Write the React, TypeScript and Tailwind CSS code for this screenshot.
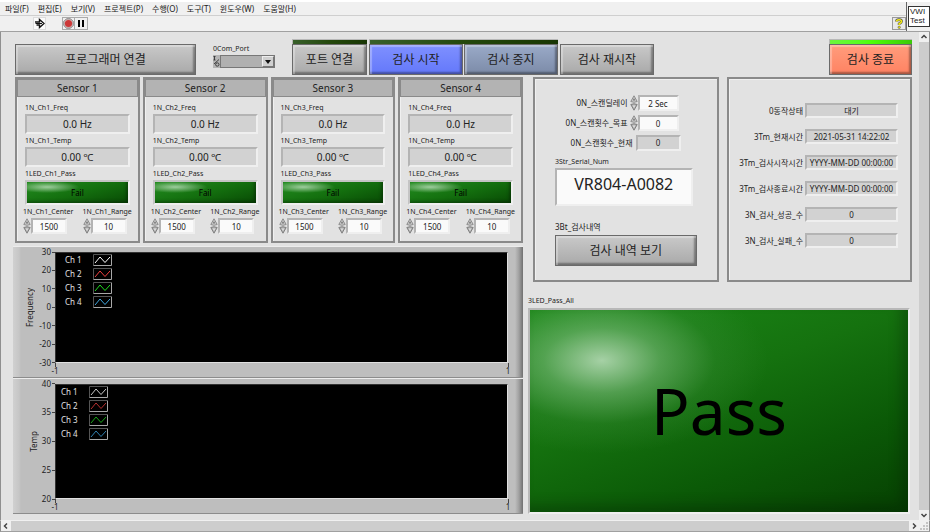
import React from "react";

const INSET = "border-2 border-t-[#b4b4b4] border-l-[#b4b4b4] border-r-[#efefef] border-b-[#efefef]";
const PANEL = "border-2 border-[#8a8a8a] shadow-[inset_1px_1px_0_#f0f0f0]";
const RAISED =
  "border border-[#6a6a6a] shadow-[inset_2px_2px_1px_rgba(255,255,255,0.3),inset_-2px_-2px_2px_rgba(0,0,0,0.35)]";

const TONES = {
  gray: "bg-linear-to-b from-[#c9c9c9] to-[#a9a9a9]",
  blue: "bg-linear-to-b from-[#7f90ff] to-[#6478fa]",
  slate: "bg-linear-to-b from-[#9aaac8] to-[#7c8ba8]",
  coral: "bg-linear-to-b from-[#ff9c7c] to-[#ff8262]",
};

function PushButton({ tone, children }: { tone: keyof typeof TONES; children: React.ReactNode }) {
  return (
    <button type="button" className={`h-[31px] w-full pt-px text-[12px] leading-none ${RAISED} ${TONES[tone]}`}>
      {children}
    </button>
  );
}

function StatusBar({ on = false }: { on?: boolean }) {
  return (
    <div
      className={`h-[5px] w-full border-t border-l border-[#b8b8b8] ${
        on
          ? "bg-linear-to-r from-[#6cf53c] via-[#4dff08] to-[#3cc80a]"
          : "bg-linear-to-r from-[#38602a] via-[#24480c] to-[#183604]"
      }`}
    />
  );
}

function Spinner({ name }: { name: string }) {
  return (
    <span className="flex w-2 flex-col">
      <button type="button" aria-label={`${name} +`} className="h-2 w-2">
        <svg viewBox="0 0 8 8" className="h-2 w-2">
          <path d="M4 0.8 L7.2 6.5 Q4 8 0.8 6.5 Z" fill="#d0d0d0" stroke="#8c8c8c" strokeWidth="1" />
          <path d="M4 3 L5.4 5.4 H2.6 Z" fill="#777" />
        </svg>
      </button>
      <button type="button" aria-label={`${name} -`} className="h-2 w-2">
        <svg viewBox="0 0 8 8" className="h-2 w-2">
          <path d="M4 7.2 L7.2 1.5 Q4 0 0.8 1.5 Z" fill="#b0b0b0" stroke="#808080" strokeWidth="1" />
          <path d="M4 5 L5.4 2.6 H2.6 Z" fill="#e0e0e0" />
        </svg>
      </button>
    </span>
  );
}

function NumberBox({ id, name, value, width }: { id: string; name: string; value: string; width: string }) {
  return (
    <span className="flex items-center">
      <Spinner name={name} />
      <input
        id={id}
        defaultValue={value}
        className={`h-4 bg-[#fafafa] text-center text-[8px] leading-none outline-none ${width} ${INSET}`}
      />
    </span>
  );
}

function Readout({ id, label, value }: { id: string; label: string; value: string }) {
  return (
    <div className="flex flex-col gap-0.5 px-0.5">
      <label htmlFor={id} className="text-[7px] leading-[8px]">
        {label}
      </label>
      <output
        id={id}
        className={`flex h-5 items-center justify-center bg-[#d2d2d2] text-[10px] leading-none ${INSET}`}
      >
        {value}
      </output>
    </div>
  );
}

function SensorCard({ n }: { n: number }) {
  return (
    <section className={PANEL}>
      <h2 className="h-[18px] border border-[#8a8a8a] bg-[#b3b3b3] text-center text-[10px] leading-4">Sensor {n}</h2>
      <div className="flex flex-col gap-[3px] px-1.5 pt-[7px] pb-[7px]">
        <Readout id={`freq${n}`} label={`1N_Ch${n}_Freq`} value="0.0 Hz" />
        <Readout id={`temp${n}`} label={`1N_Ch${n}_Temp`} value="0.00 ℃" />
        <div className="flex flex-col gap-0.5 px-0.5">
          <span className="text-[7px] leading-[8px]">1LED_Ch{n}_Pass</span>
          <div className="flex h-[25px] items-center justify-center border-2 border-t-[#c4c4c4] border-r-[#efefef] border-b-[#efefef] border-l-[#c4c4c4] bg-[radial-gradient(ellipse_32%_28%_at_20%_24%,rgba(190,225,190,0.8),rgba(120,180,120,0)),linear-gradient(165deg,#238c20,#14700f_50%,#084a04)] text-[8px] leading-none text-black shadow-[inset_-2px_-2px_3px_rgba(0,0,0,0.3)]">
            Fail
          </div>
        </div>
        <div className="flex justify-between">
          <div className="flex flex-col gap-0.5">
            <label htmlFor={`center${n}`} className="text-[7px] leading-[8px]">
              1N_Ch{n}_Center
            </label>
            <NumberBox id={`center${n}`} name={`Center ${n}`} value="1500" width="w-9" />
          </div>
          <div className="flex flex-col gap-0.5">
            <label htmlFor={`range${n}`} className="text-[7px] leading-[8px]">
              1N_Ch{n}_Range
            </label>
            <NumberBox id={`range${n}`} name={`Range ${n}`} value="10" width="w-9" />
          </div>
        </div>
      </div>
    </section>
  );
}

type ChartProps = {
  title: string;
  ticks: number[];
  grow: string;
  titleWidth: string;
  legendPad: string;
  colors: string[];
};

function Chart({ title, ticks, grow, titleWidth, legendPad, colors }: ChartProps) {
  return (
    <section
      className={`flex flex-col border-t border-b border-t-[#ececec] border-b-[#8c8c8c] bg-[linear-gradient(to_right,#d0d0d0,#c6c6c6_6px,#bebebe_8px,#bebebe_calc(100%-8px),#a0a0a0_calc(100%-4px),#707070)] pt-[5px] pr-[15px] ${grow}`}
    >
      <div className="flex flex-1">
        <div className="flex w-[42px] justify-between">
          <div className={`flex items-center justify-end ${titleWidth}`}>
            <span className="rotate-180 text-[8px] leading-[10px] [writing-mode:vertical-rl]">{title}</span>
          </div>
          <div className="flex w-4 flex-col justify-between">
            {ticks.map((t) => (
              <div key={t} className="flex h-0 items-center justify-end gap-px text-[8px] leading-none">
                {t}
                <span className="h-px w-[3px] shrink-0 bg-[#444]" />
              </div>
            ))}
          </div>
        </div>
        <div
          className={`flex flex-1 flex-col gap-0.5 border border-t-[#333] border-r-[#e0e0e0] border-b-[#e0e0e0] border-l-[#333] bg-black ${legendPad}`}
        >
          {colors.map((c, i) => (
            <div key={c} className="flex items-center gap-3 text-[8px] leading-none text-[#e0e0e0]">
              <span className="w-4 whitespace-nowrap">Ch {i + 1}</span>
              <svg viewBox="0 0 19 12" className="h-3 w-[19px]">
                <path d="M0.5 11.5 V0.5 H18" fill="none" stroke="#555" />
                <path d="M0.5 11.5 H18.5 V0.5" fill="none" stroke="#a8a8a8" />
                <path d="M2 9 L7 3 L12 8.5 L17 3" fill="none" stroke={c} strokeWidth="1" />
              </svg>
            </div>
          ))}
        </div>
      </div>
      <div className="-mr-1 flex h-[14px] justify-between pl-[38px] text-[8px] leading-none">
        <span className="flex w-2 flex-col items-center">
          <span className="h-1 w-px shrink-0 bg-[#444]" />
          -1
        </span>
        <span className="flex w-2 flex-col items-center">
          <span className="h-1 w-px shrink-0 bg-[#444]" />1
        </span>
      </div>
    </section>
  );
}

function StatusRow({ id, label, value }: { id: string; label: string; value: string }) {
  return (
    <div className="flex items-center justify-end gap-0.5">
      <label htmlFor={id} className="text-[8px] leading-none whitespace-nowrap">
        {label}
      </label>
      <output
        id={id}
        className={`flex h-[15px] w-[93px] items-center justify-center bg-[#d2d2d2] text-[8px] leading-none whitespace-nowrap ${INSET}`}
      >
        {value}
      </output>
    </div>
  );
}

const MENU = ["파일(F)", "편집(E)", "보기(V)", "프로젝트(P)", "수행(O)", "도구(T)", "윈도우(W)", "도움말(H)"];

const STATUS = [
  ["0동작상태", "대기"],
  ["3Tm_현재시간", "2021-05-31 14:22:02"],
  ["3Tm_검사시작시간", "YYYY-MM-DD 00:00:00"],
  ["3Tm_검사종료시간", "YYYY-MM-DD 00:00:00"],
  ["3N_검사_성공_수", "0"],
  ["3N_검사_실패_수", "0"],
];

function ScrollArrow({ label, d }: { label: string; d: string }) {
  return (
    <button type="button" aria-label={label} className="flex size-[10px] shrink-0 items-center justify-center bg-[#f0f0f0]">
      <svg viewBox="0 0 10 10" className="size-[10px]">
        <path d={d} fill="none" stroke="#444" strokeWidth="1.5" />
      </svg>
    </button>
  );
}

function Header() {
  return (
    <header className="flex h-8 border-t-2 border-b border-t-white border-b-[#a0a0a0] bg-[#f0f0f0]">
      <div className="flex flex-1 flex-col">
        <nav className="flex h-[14px] items-center gap-[9px] border-b border-[#cfcfcf] pl-[5px] text-[8px] leading-none">
          {MENU.map((m) => (
            <button key={m} type="button" className="whitespace-nowrap">
              {m}
            </button>
          ))}
        </nav>
        <div className="flex flex-1 items-center pl-[33px]">
          <button type="button" aria-label="실행" className="h-[13px] w-[13px] border border-[#dcdcdc] bg-[#fafafa]">
            <svg viewBox="0 0 11 11" className="size-[11px]">
              <path d="M1 4 H5.5 V1.5 L10 5.5 L5.5 9.5 V7 H2.5" fill="#fff" stroke="#111" strokeWidth="1.4" />
              <path d="M1.5 5.5 H8" stroke="#111" strokeWidth="1" />
            </svg>
          </button>
          <button
            type="button"
            aria-label="중단"
            className="ml-4 flex h-[13px] w-[13px] items-center justify-center border border-[#aaa]"
          >
            <svg viewBox="0 0 11 11" className="size-[11px]">
              <path d="M3.5 0.8 H7.5 L10.2 3.5 V7.5 L7.5 10.2 H3.5 L0.8 7.5 V3.5 Z" fill="#d8c4c4" stroke="#666" strokeWidth="0.8" />
              <circle cx="5.5" cy="5.5" r="3.6" fill="#cc3838" />
            </svg>
          </button>
          <button
            type="button"
            aria-label="일시 정지"
            className="flex h-[13px] w-[13px] items-center justify-center gap-0.5 border border-l-0 border-[#aaa]"
          >
            <span className="h-[7px] w-0.5 bg-black" />
            <span className="h-[7px] w-0.5 bg-black" />
          </button>
          <button
            type="button"
            aria-label="도움말"
            className="ml-auto flex h-[13px] w-[14px] items-center justify-center border border-[#999] bg-[#e8e8e8]"
          >
            <svg viewBox="0 0 10 11" className="h-[11px] w-[10px]">
              <path d="M2.5 3.5 Q2.5 1.7 5 1.7 Q7.5 1.7 7.5 3.5 Q7.5 4.6 5.2 5.8 V7" fill="none" stroke="#555" strokeWidth="2.8" />
              <path d="M2.5 3.5 Q2.5 1.7 5 1.7 Q7.5 1.7 7.5 3.5 Q7.5 4.6 5.2 5.8 V7" fill="none" stroke="#f4ec10" strokeWidth="1.6" />
              <circle cx="5.2" cy="9.3" r="1.2" fill="#f4ec10" stroke="#555" strokeWidth="0.6" />
            </svg>
          </button>
        </div>
      </div>
      <div className="flex w-6 justify-end border-l border-[#666] pt-1">
        <div className="h-[21px] w-[22px] border border-[#333] bg-white pl-px font-['Liberation_Sans',sans-serif] text-[8px] leading-[9px]">
          VWI
          <br />
          Test
        </div>
      </div>
    </header>
  );
}

export default function App() {
  return (
    <div className="flex min-h-screen flex-col bg-[#e2e2e2] font-['Noto_Sans','Noto_Sans_CJK_KR',sans-serif] text-[#222]">
      <Header />
      <div className="flex flex-1 border-x border-[#8f8f8f]">
        <main className="flex flex-1 flex-col gap-0.5 pt-[7px] pr-[7px] pb-1.5 pl-3">
          <div className="flex items-end gap-0.5 pl-0.5">
            <div className="w-[181px]">
              <PushButton tone="gray">프로그래머 연결</PushButton>
            </div>
            <div className="mx-[15px] flex w-[62px] flex-col gap-0.5 pb-[7px]">
              <label htmlFor="com" className="text-[7px] leading-[8px]">
                0Com_Port
              </label>
              <div className="flex h-[13px] bg-[#b4b4b4]">
                <span aria-hidden="true" className="w-[7px]">
                  <svg viewBox="0 0 7 13" className="h-[13px] w-[7px]">
                    <path d="M0.5 1.5 H2.5 M1.5 1.5 V5 M0.5 5 H2.5 M1 9 L6 4.5" stroke="#333" strokeWidth="0.9" />
                    <circle cx="4.3" cy="9.5" r="1.7" fill="none" stroke="#333" strokeWidth="0.9" />
                  </svg>
                </span>
                <div className="grid flex-1 grid-cols-[1fr_12px] border border-[#777]">
                  <select
                    id="com"
                    className="col-span-2 col-start-1 row-start-1 w-full appearance-none bg-[#b0b0b0] text-[7px] outline-none"
                  >
                    <option value=""></option>
                  </select>
                  <span className="pointer-events-none col-start-2 row-start-1 flex items-center justify-center border border-t-[#eee] border-r-[#777] border-b-[#777] border-l-[#eee] bg-[#d0d0d0]">
                    <svg viewBox="0 0 6 4" className="h-1 w-1.5">
                      <path d="M0 0 H6 L3 4 Z" fill="#111" />
                    </svg>
                  </span>
                </div>
              </div>
            </div>
            <div className="w-[75px]">
              <StatusBar />
              <PushButton tone="gray">포트 연결</PushButton>
            </div>
            <div className="w-[189px]">
              <StatusBar />
              <div className="flex gap-px">
                <PushButton tone="blue">검사 시작</PushButton>
                <PushButton tone="slate">검사 중지</PushButton>
              </div>
            </div>
            <div className="w-[94px]">
              <PushButton tone="gray">검사 재시작</PushButton>
            </div>
            <div className="ml-auto w-[83px]">
              <StatusBar on />
              <PushButton tone="coral">검사 종료</PushButton>
            </div>
          </div>

          <div className="grid flex-1 grid-cols-[510fr_384fr] gap-[5px]">
            <div className="flex flex-col gap-[3px]">
              <div className="grid grid-cols-4 gap-[3px] pl-0.5">
                {[1, 2, 3, 4].map((n) => (
                  <SensorCard key={n} n={n} />
                ))}
              </div>
              <div className="flex flex-1 flex-col">
                <Chart
                  title="Frequency"
                  ticks={[30, 20, 10, 0, -10, -20, -30]}
                  grow="flex-[131]"
                  titleWidth="w-[22px]"
                  legendPad="pl-[9px] pt-px"
                  colors={["#ffffff", "#f04040", "#20e020", "#40a8e0"]}
                />
                <Chart
                  title="Temp"
                  ticks={[40, 35, 30, 25, 20]}
                  grow="flex-[136]"
                  titleWidth="w-[26px]"
                  legendPad="pl-[5px] pt-px"
                  colors={["#c8c8c8", "#b83030", "#18a818", "#3080b0"]}
                />
              </div>
            </div>

            <div className="flex flex-col pr-0.5">
              <div className="-mr-0.5 grid grid-cols-2 gap-2 pl-[5px]">
                <section className={`pt-4 pr-5 pb-[14px] pl-5 ${PANEL}`}>
                  <div className="flex flex-col items-end gap-1 pr-4">
                    <div className="flex items-center gap-0.5 pr-0.5 whitespace-nowrap">
                      <label htmlFor="delay" className="text-[8px] leading-none">
                        0N_스캔딜레이
                      </label>
                      <NumberBox id="delay" name="스캔딜레이" value="2 Sec" width="w-[41px]" />
                    </div>
                    <div className="flex items-center gap-0.5 pr-0.5 whitespace-nowrap">
                      <label htmlFor="target" className="text-[8px] leading-none">
                        0N_스캔횟수_목표
                      </label>
                      <NumberBox id="target" name="스캔횟수" value="0" width="w-[41px]" />
                    </div>
                    <div className="flex items-center gap-[3px] whitespace-nowrap">
                      <label htmlFor="current" className="text-[8px] leading-none">
                        0N_스캔횟수_현재
                      </label>
                      <output
                        id="current"
                        className={`flex h-4 w-[45px] items-center justify-center bg-[#d2d2d2] text-[8px] leading-none ${INSET}`}
                      >
                        0
                      </output>
                    </div>
                  </div>
                  <div className="mt-[7px] flex flex-col gap-0.5 pr-1">
                    <label htmlFor="serial" className="text-[7px] leading-[8px]">
                      3Str_Serial_Num
                    </label>
                    <input
                      id="serial"
                      defaultValue="VR804-A0082"
                      className={`h-[38px] w-full bg-[#fafafa] pb-1.5 text-center text-[16px] leading-none outline-none ${INSET}`}
                    />
                  </div>
                  <div className="mt-4 flex flex-col gap-[3px]">
                    <span className="text-[8px] leading-[10px]">3Bt_검사내역</span>
                    <PushButton tone="gray">검사 내역 보기</PushButton>
                  </div>
                </section>
                <section className={`flex flex-col gap-[11px] pt-6 pr-3 ${PANEL}`}>
                  {STATUS.map(([label, value], i) => (
                    <StatusRow key={label} id={`status${i}`} label={label} value={value} />
                  ))}
                </section>
              </div>
              <span className="mt-[14px] text-[7px] leading-[10px]">3LED_Pass_All</span>
              <div className="mt-0.5 flex flex-1 items-center justify-center border-2 border-t-[#b8b8b8] border-r-[#efefef] border-b-[#efefef] border-l-[#b8b8b8] bg-[radial-gradient(ellipse_44%_46%_at_19%_25%,rgba(178,216,178,0.92),rgba(130,190,130,0.55)_35%,rgba(80,155,80,0.2)_68%,rgba(60,140,60,0)),linear-gradient(160deg,#1c8a18,#15720f_40%,#0b5a07_70%,#064002)] text-[64px] leading-none text-black shadow-[inset_-8px_-8px_12px_rgba(0,20,0,0.25)]">
                Pass
              </div>
            </div>
          </div>
        </main>
        <div className="flex w-[10px] flex-col bg-[#cdcdcd]">
          <ScrollArrow label="위로" d="M2.5 6 L5 3.5 L7.5 6" />
          <div className="flex-1" />
          <ScrollArrow label="아래로" d="M2.5 4 L5 6.5 L7.5 4" />
        </div>
      </div>
      <div className="flex h-3 border border-t-[#f0f0f0] border-r-[#8f8f8f] border-b-[#a0a0a0] border-l-[#8f8f8f] bg-[#cdcdcd]">
        <ScrollArrow label="왼쪽" d="M6 2.5 L3.5 5 L6 7.5" />
        <div className="flex-1" />
        <ScrollArrow label="오른쪽" d="M4 2.5 L6.5 5 L4 7.5" />
        <svg viewBox="0 0 10 10" className="size-[10px] bg-[#f0f0f0]">
          <path d="M7 1 h2 v2 h-2z M7 4 h2 v2 h-2z M4 4 h2 v2 h-2z M7 7 h2 v2 h-2z M4 7 h2 v2 h-2z M1 7 h2 v2 h-2z" fill="#c4c4c4" />
        </svg>
      </div>
    </div>
  );
}
